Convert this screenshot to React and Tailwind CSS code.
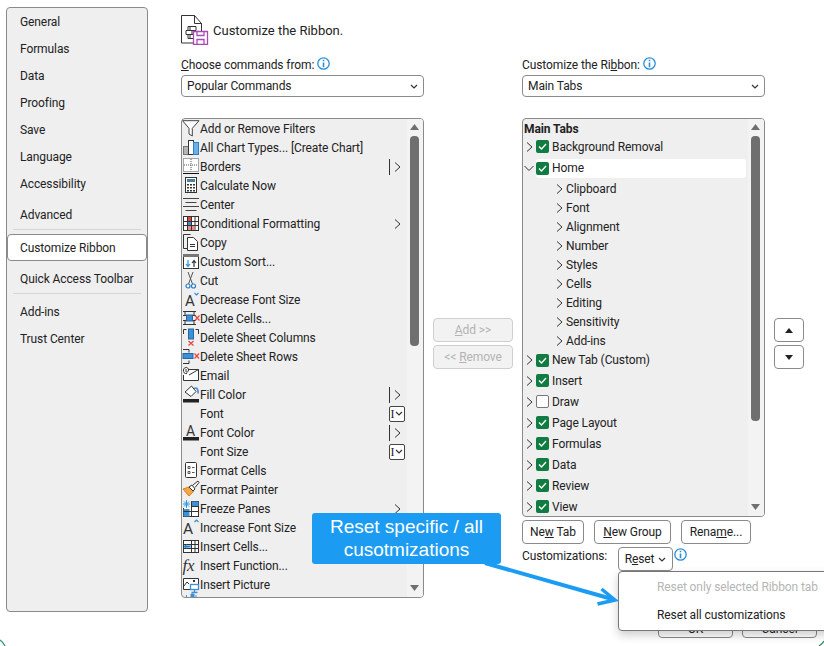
import React from 'react';

const navTop = ['General', 'Formulas', 'Data', 'Proofing', 'Save', 'Language', 'Accessibility'];

const Chev = ({ className = '' }) => (
  <svg width="7" height="10" viewBox="0 0 7 10" className={`shrink-0 ${className}`}>
    <path d="M1 .5l5 4.500-5 4.500" fill="none" stroke="#333" strokeWidth="1" />
  </svg>
);

const ChevDown = () => (
  <svg width="8" height="5" viewBox="0 0 8 5" className="shrink-0">
    <path d="M1 1l3 3 3-3" fill="none" stroke="#333" strokeWidth="1.200" />
  </svg>
);

const Info = ({ className = '' }) => (
  <svg width="13" height="13" viewBox="0 0 13 13" className={`shrink-0 ${className}`}>
    <circle cx="6.500" cy="6.500" r="5.700" fill="#fff" stroke="#2b8fd8" strokeWidth="1.300" />
    <path d="M6.500 2.800v1.400M6.500 5.400v4.800" stroke="#2b8fd8" strokeWidth="1.600" />
  </svg>
);

const Ic = ({ children }) => (
  <svg width="18" height="19" viewBox="0 0 18 19" className="shrink-0 overflow-visible">
    {children}
  </svg>
);

const k = '#333';
const blue = '#3d8fd6';
const red = '#e8443a';

const icons = {
  filter: <path d="M.5 1.700H17L10.300 9.300V17L7 15V9.300z" fill="#fff" stroke="#444" />,
  chart: (
    <>
      <rect x="1.500" y="8.500" width="5" height="8" fill="#b5b5b5" stroke="#777" />
      <rect x="6.500" y="2.500" width="5" height="14" fill="#fff" stroke={k} />
      <rect x="11.500" y="4.500" width="5" height="12" fill="#6cb0e8" stroke="#2e7fc4" />
    </>
  ),
  borders: (
    <>
      <rect x="1.500" y="1.500" width="15" height="13" fill="#fff" stroke="#555" strokeDasharray="1 1" />
      <path d="M9 2v12M2 8h14" stroke="#555" strokeDasharray="1 1" />
      <path d="M1 16.500h16" stroke="#111" strokeWidth="1.200" />
    </>
  ),
  calc: (
    <>
      <rect x="3.500" y="1.500" width="11" height="15" fill="#fff" stroke={k} />
      <rect x="5" y="3" width="8" height="3" fill="#4a7f9f" />
      <path d="M5 8h2v1.500H5zM8 8h2v1.500H8zM11 8h2v1.500h-2zM5 11h2v1.500H5zM8 11h2v1.500H8zM11 11h2v1.500h-2zM5 14h2v1.500H5zM8 14h2v1.500H8zM11 14h2v1.500h-2z" fill={k} />
    </>
  ),
  center: <path d="M1 3.500h16M3.500 7.500h11M1 11.500h16M3.500 15.500h11" stroke="#444" />,
  cond: (
    <>
      <rect x="1.500" y="2.500" width="15" height="14" fill="#fff" stroke={k} />
      <rect x="5" y="3" width="4" height="4" fill={red} />
      <rect x="5" y="7" width="4" height="4" fill={blue} />
      <rect x="5" y="12" width="7" height="4" fill="#f28a86" />
      <path d="M5.500 2.500v14M9.500 2.500v14M13 2.500v14M2 7.500h14M2 11.500h14" stroke={k} fill="none" />
    </>
  ),
  copy: (
    <>
      <path d="M5.500 15.500h-4V1.500h7" fill="none" stroke={k} />
      <path d="M5.500 4.500h6l4 4v9h-10z" fill="#fff" stroke={k} />
      <path d="M8 11.500h5M8 13.500h5" stroke={k} />
    </>
  ),
  sort: (
    <>
      <rect x="1.500" y="2.500" width="15" height="14" fill="#fff" stroke={k} />
      <rect x="1" y="2" width="16" height="3" fill="#777" />
      <path d="M6 8v6M4 12l2 2.500L8 12" fill="none" stroke="#2b8fd8" strokeWidth="1.200" />
      <path d="M12 15V9M10 11l2-2.500 2 2.500" fill="none" stroke={k} strokeWidth="1.200" />
    </>
  ),
  cut: (
    <>
      <path d="M6 1l4.500 12M11 1L6.500 13" stroke="#555" fill="none" />
      <circle cx="6" cy="15" r="2" fill="#fff" stroke="#2b7fc4" strokeWidth="1.200" />
      <circle cx="11.500" cy="15" r="2" fill="#fff" stroke="#2b7fc4" strokeWidth="1.200" />
    </>
  ),
  dec: (
    <>
      <text x="3" y="16" fontSize="15" fill="#333" fontFamily="Roboto, sans-serif">A</text>
      <path d="M12.500 3l2 2 2-2" fill="none" stroke="#2b8fd8" strokeWidth="1.100" />
    </>
  ),
  delCells: (
    <>
      <path d="M1 2.500h13M1 15.500h13M3 2.500v4M12 2.500v4M3 11.500v4M12 11.500v4M1 6.500h3M1 11.500h3M11 6.500h3M11 11.500h3" stroke={k} fill="none" />
      <rect x="4.500" y="6" width="6" height="6" fill={blue} stroke="#2467a5" />
      <path d="M13 6.500l4.500 5M17.500 6.500l-4.500 5" stroke={red} strokeWidth="1.200" />
    </>
  ),
  delCols: (
    <>
      <path d="M1.500 6V1.500h3M16.500 6V1.500h-3" stroke={k} fill="none" />
      <rect x="6.500" y="1" width="5" height="10" fill={blue} stroke="#2467a5" />
      <path d="M6.500 13l5 4.500M11.500 13l-5 4.500" stroke={red} strokeWidth="1.200" />
    </>
  ),
  delRows: (
    <>
      <path d="M1 2.500h6v3M1 16.500h6v-3" stroke={k} fill="none" />
      <rect x="1" y="6.500" width="10" height="5" fill={blue} stroke="#2467a5" />
      <path d="M12.500 6.500l4.500 5M17 6.500l-4.500 5" stroke={red} strokeWidth="1.200" />
    </>
  ),
  email: (
    <>
      <path d="M7 3.500h9.500v11h-15V9" fill="#fff" stroke={k} />
      <path d="M7 9l9.500-5.500" stroke={k} />
      <path d="M5 7.500C2 8 1.500 6 1.500 4c0-3 5-3.500 5 0 0 2-2 3-2.500 1.500V3" fill="#fff" stroke={k} />
    </>
  ),
  fill: (
    <>
      <path d="M9.500 1l4.500 5.500-5 5-6-4.500z" fill="#fff" stroke={k} />
      <path d="M12 3.500c3-1.500 4.500 1 4 5" fill="none" stroke={blue} strokeWidth="1.600" />
      <rect x="1" y="14" width="16" height="3.500" fill="#222" />
    </>
  ),
  fontColor: (
    <>
      <text x="4" y="13" fontSize="14" fill="#333" fontFamily="Roboto, sans-serif">A</text>
      <rect x="1" y="14" width="16" height="3.500" fill="#222" />
    </>
  ),
  formatCells: (
    <>
      <rect x="3.500" y="1.500" width="11" height="15" rx="1" fill="#fff" stroke={k} />
      <path d="M6 5.500h2v2H6zM6 10.500h2v2H6z" fill="none" stroke="#555" />
      <path d="M10 6.500h2.500M10 11.500h2.500" stroke="#555" />
    </>
  ),
  painter: (
    <>
      <path d="M1 9l6 7 5-5-5-4z" fill="#f4a64a" stroke="#e07b1a" />
      <path d="M7 7l3-2 3 4-2 2z" fill="#fff" stroke={k} />
      <path d="M11 5l5-4 1 1.500-4 5" fill="#fff" stroke={k} />
    </>
  ),
  freeze: (
    <>
      <rect x="1.500" y="2.500" width="15" height="15" fill="#fff" stroke={k} />
      <rect x="9" y="2.500" width="7.500" height="4.500" fill={blue} />
      <rect x="1.500" y="10" width="6" height="7.500" fill={blue} />
      <path d="M9.500 2.500v15M1.500 7.500h15M1.500 12.500h15" stroke={k} />
      <rect x="0" y="0" width="9" height="9" fill="#efefef" />
      <path d="M4.500 1v8M1 5h7M2 2.500l5 5M7 2.500l-5 5" stroke="#2b9be0" />
    </>
  ),
  inc: (
    <>
      <text x="1" y="16" fontSize="15.500" fill="#333" fontFamily="Roboto, sans-serif">A</text>
      <path d="M12.500 4l2-2 2 2" fill="none" stroke="#2b8fd8" strokeWidth="1.100" />
    </>
  ),
  insCells: (
    <>
      <rect x="1.500" y="3.500" width="15" height="12" fill="#fff" stroke={k} />
      <rect x="2" y="7" width="7" height="4.500" fill="#8cc3ee" />
      <path d="M9.500 3.500v12M1.500 7.500h15M1.500 11.500h15M13 3.500v12" stroke={k} />
      <path d="M8 9.500H2.500M5 7.500l-2.500 2 2.500 2" fill="none" stroke="#1f7cc8" />
    </>
  ),
  fx: <text x="0.500" y="15" fontSize="17" fill="#333" fontStyle="italic" fontFamily="Liberation Serif, serif">fx</text>,
  picture: (
    <>
      <path d="M8 14.500H1.500v-11h15V9" fill="#fff" stroke={k} />
      <path d="M2 11l3-4 2 2" fill="none" stroke={k} />
      <rect x="11" y="5" width="2" height="2" fill={k} />
      <rect x="8.500" y="9.500" width="8" height="5" fill="#fff" stroke={blue} strokeWidth="1.300" />
      <path d="M12.500 15v2.500M9.500 17.500h6" stroke={blue} strokeWidth="1.300" />
    </>
  ),
  insCol: <path d="M4.500 1v3M9 0h3v3H9zM14 1v3" stroke={blue} fill={blue} />,
};

const commands = [
  ['Add or Remove Filters', 'filter'],
  ['All Chart Types... [Create Chart]', 'chart'],
  ['Borders', 'borders', 'split'],
  ['Calculate Now', 'calc'],
  ['Center', 'center'],
  ['Conditional Formatting', 'cond', 'sub'],
  ['Copy', 'copy'],
  ['Custom Sort...', 'sort'],
  ['Cut', 'cut'],
  ['Decrease Font Size', 'dec'],
  ['Delete Cells...', 'delCells'],
  ['Delete Sheet Columns', 'delCols'],
  ['Delete Sheet Rows', 'delRows'],
  ['Email', 'email'],
  ['Fill Color', 'fill', 'split'],
  ['Font', null, 'box'],
  ['Font Color', 'fontColor', 'split'],
  ['Font Size', null, 'box'],
  ['Format Cells', 'formatCells'],
  ['Format Painter', 'painter'],
  ['Freeze Panes', 'freeze', 'sub'],
  ['Increase Font Size', 'inc'],
  ['Insert Cells...', 'insCells'],
  ['Insert Function...', 'fx'],
  ['Insert Picture', 'picture'],
  ['', 'insCol'],
];

const Scrollbar = ({ thumb }) => (
  <div className="w-[16px] shrink-0 bg-[#f3f3f3] flex flex-col items-start pl-[3px]">
    <svg width="9" height="6" viewBox="0 0 9 6" className="mt-[5px] mb-[6px] shrink-0">
      <path d="M4.500 0L9 6H0z" fill="#6f6f6f" />
    </svg>
    <div className={`w-[9px] rounded-[4px] bg-[#6f6f6f] shrink-0 ${thumb}`} />
    <svg width="9" height="6" viewBox="0 0 9 6" className="mt-auto mb-[6px] shrink-0">
      <path d="M4.500 6L9 0H0z" fill="#6f6f6f" />
    </svg>
  </div>
);

function CommandRow({ label, icon, extra }) {
  return (
    <div className="h-[19px] shrink-0 flex items-center relative">
      <Ic>{icon ? icons[icon] : null}</Ic>
      <span className="whitespace-nowrap">{label}</span>
      {extra === 'sub' && <Chev className="ml-auto mr-[6px]" />}
      {extra === 'split' && (
        <div className="ml-auto mr-[6px] flex items-center gap-[4px]">
          <div className="w-px h-[16px] bg-[#333]" />
          <Chev />
        </div>
      )}
      {extra === 'box' && (
        <div className="ml-auto mr-[2px] w-[16px] h-[16px] border border-[#444] rounded-[2px] flex items-center justify-center gap-px bg-white">
          <span className="font-['Liberation_Serif',serif] text-[12px] leading-none">I</span>
          <ChevDown />
        </div>
      )}
    </div>
  );
}

const Check = ({ checked }) =>
  checked ? (
    <div className="w-[13px] h-[13px] rounded-[2px] bg-[#107c41] flex items-center justify-center shrink-0">
      <svg width="9" height="7" viewBox="0 0 9 7">
        <path d="M1 3.500L3.500 6 8 1" fill="none" stroke="#fff" strokeWidth="1.300" />
      </svg>
    </div>
  ) : (
    <div className="w-[13px] h-[13px] rounded-[2px] bg-white border border-[#777] shrink-0" />
  );

function TabRow({ label, checked = true, h = 'h-[21px]' }) {
  return (
    <div className={`${h} shrink-0 flex items-center pl-[3px]`}>
      <Chev className="mr-[3px]" />
      <Check checked={checked} />
      <span className="ml-[3px] whitespace-nowrap">{label}</span>
    </div>
  );
}

function GroupRow({ label }) {
  return (
    <div className="h-[19px] shrink-0 flex items-center pl-[33px]">
      <Chev className="mr-[3px]" />
      <span className="whitespace-nowrap">{label}</span>
    </div>
  );
}

const Btn = ({ className = '', children }) => (
  <div className={`h-[24px] border border-[#8a8a8a] rounded-[4px] bg-white flex items-center justify-center whitespace-nowrap ${className}`}>
    {children}
  </div>
);

const Select = ({ value }) => (
  <div className="mt-[2px] h-[22px] border border-[#8a8a8a] rounded-[4px] flex items-center justify-between pl-[5px] pr-[5px]">
    <span>{value}</span>
    <ChevDown />
  </div>
);

export default function App() {
  return (
    <div className="relative w-[824px] h-[646px] overflow-hidden bg-white flex items-start font-['Roboto',sans-serif] text-[12px] tracking-[-0.1px] leading-[16px] text-[#222222]">
      {/* left nav */}
      <div className="ml-[6px] mt-[7px] w-[142px] h-[605px] bg-[#efefef] border border-[#8a8a8a] rounded-[4px] shrink-0 flex flex-col">
        <div>
          {navTop.map((n) => (
            <div key={n} className="h-[27px] flex items-center pl-[13px]">{n}</div>
          ))}
        </div>
        <div className="h-[30px] mt-[2px] pt-px flex items-center pl-[13px] shrink-0">Advanced</div>
        <div className="mx-[6px] h-px bg-[#d6d6d6] shrink-0" />
        <div className="mt-[4px] h-[27px] bg-white border border-[#8a8a8a] rounded-[4px] flex items-center pl-[12px] shrink-0">Customize Ribbon</div>
        <div className="h-[30px] mt-[2px] pt-px flex items-center pl-[13px] shrink-0">Quick Access Toolbar</div>
        <div className="mx-[6px] h-px bg-[#d6d6d6] shrink-0" />
        <div className="h-[27px] mt-[4px] flex items-center pl-[13px] shrink-0">Add-ins</div>
        <div className="h-[27px] flex items-center pl-[13px] shrink-0">Trust Center</div>
      </div>

      <div className="ml-[33px] pt-[15px] shrink-0 flex flex-col">
        {/* header */}
        <div className="h-[30px] flex items-center gap-[3px]">
          <svg width="29" height="30" viewBox="0 0 29 30" className="shrink-0">
            <path d="M.5.500h13l7 8V28H.5z" fill="#fff" stroke="#333" />
            <path d="M13.500.500v8h7" fill="none" stroke="#333" />
            <path d="M9 11.500h6v4H9zM5 15.500h6v4H5zM9 19.500h6v4H9zM7 15.500v-4h2M7 19.500v4h2" fill="#fff" stroke="#333" />
            <path d="M12.500 16.500H26.500V29.500H12.500z" fill="#fff" stroke="#a94ab5" strokeWidth="1.300" />
            <path d="M16 16.500v4h7v-4M16 29.500v-5h7v5" fill="none" stroke="#a94ab5" strokeWidth="1.300" />
          </svg>
          <span className="text-[13px] tracking-normal pt-px">Customize the Ribbon.</span>
        </div>

        <div className="mt-[12px] flex items-start">
          {/* commands column */}
          <div className="w-[243px] shrink-0 flex flex-col">
            <div className="h-[16px] flex items-center gap-[3px]">
              <span><span className="underline">C</span>hoose commands from:</span>
              <Info className="-mt-[3px]" />
            </div>
            <Select value="Popular Commands" />
            <div className="mt-[21px] h-[480px] border border-[#8a8a8a] rounded-[4px] bg-[#efefef] overflow-hidden flex">
              <div className="flex-1 min-w-0 flex flex-col">
                {commands.map(([label, icon, extra]) => (
                  <CommandRow key={label + icon} label={label} icon={icon} extra={extra} />
                ))}
              </div>
              <Scrollbar thumb="h-[210px]" />
            </div>
          </div>

          {/* add / remove */}
          <div className="ml-[9px] w-[80px] pt-[261px] shrink-0 flex flex-col gap-[3px]">
            <div className="h-[24px] border border-[#cfcfcf] rounded-[4px] bg-[#f2f2f2] text-[#b3b3b3] flex items-center justify-center"><span><span className="underline">A</span>dd &gt;&gt;</span></div>
            <div className="h-[24px] border border-[#cfcfcf] rounded-[4px] bg-[#f2f2f2] text-[#b3b3b3] flex items-center justify-center"><span>&lt;&lt; <span className="underline">R</span>emove</span></div>
          </div>

          {/* ribbon column */}
          <div className="ml-[9px] w-[243px] shrink-0 flex flex-col">
            <div className="h-[16px] flex items-center gap-[3px]">
              <span>Customize the Ri<span className="underline">b</span>bon:</span>
              <Info className="-mt-[3px]" />
            </div>
            <Select value="Main Tabs" />
            <div className="mt-[21px] h-[399px] border border-[#8a8a8a] rounded-[4px] bg-[#efefef] overflow-hidden flex">
              <div className="flex-1 min-w-0 flex flex-col">
                <div className="h-[18px] shrink-0 flex items-center pl-px pt-px font-bold">Main Tabs</div>
                <TabRow label="Background Removal" h="h-[19px]" />
                <div className="mt-[2px] h-[20px] shrink-0 flex items-center pl-[1px] pr-[2px]">
                  <svg width="10" height="7" viewBox="0 0 10 7" className="mr-[2px] shrink-0">
                    <path d="M.5 1L5 5.500 9.500 1" fill="none" stroke="#333" />
                  </svg>
                  <div className="flex-1 h-[19px] bg-white rounded-[3px] flex items-center">
                    <Check checked />
                    <span className="ml-[3px]">Home</span>
                  </div>
                </div>
                <div className="h-px shrink-0" />
                {['Clipboard', 'Font', 'Alignment', 'Number', 'Styles', 'Cells', 'Editing', 'Sensitivity', 'Add-ins'].map((g) => (
                  <GroupRow key={g} label={g} />
                ))}
                <TabRow label="New Tab (Custom)" h="h-[20px]" />
                <TabRow label="Insert" />
                <TabRow label="Draw" checked={false} />
                <TabRow label="Page Layout" />
                <TabRow label="Formulas" />
                <TabRow label="Data" />
                <TabRow label="Review" />
                <TabRow label="View" />
              </div>
              <Scrollbar thumb="h-[285px]" />
            </div>
            <div className="mt-[3px] flex gap-[10px]">
              <Btn className="w-[62px]"><span>Ne<span className="underline">w</span> Tab</span></Btn>
              <Btn className="w-[77px]"><span><span className="underline">N</span>ew Group</span></Btn>
              <Btn className="w-[70px]"><span>Rena<span className="underline">m</span>e...</span></Btn>
            </div>
            <div className="mt-[3px] flex items-start">
              <span className="w-[96px] mt-[1px] shrink-0">Customizations:</span>
              <Btn className="w-[55px] gap-[4px]"><span>R<span className="underline">e</span>set</span><ChevDown /></Btn>
              <Info className="ml-[1px] mt-[1px]" />
            </div>
          </div>

          {/* move up / down */}
          <div className="ml-[9px] w-[30px] pt-[261px] shrink-0 flex flex-col gap-[3px]">
            <Btn>
              <svg width="8" height="5" viewBox="0 0 8 5"><path d="M4 0l4 5H0z" fill="#222" /></svg>
            </Btn>
            <Btn>
              <svg width="8" height="5" viewBox="0 0 8 5"><path d="M4 5l4-5H0z" fill="#222" /></svg>
            </Btn>
          </div>
        </div>
      </div>

      {/* dialog buttons behind the open menu */}
      <Btn className="absolute left-[658px] top-[614px] w-[75px]"><span className="pt-[6px]">OK</span></Btn>
      <Btn className="absolute left-[742px] top-[614px] w-[75px]"><span className="pt-[6px]">Cancel</span></Btn>

      {/* reset menu */}
      <div className="absolute left-[618px] top-[571px] w-[230px] h-[60px] bg-white border border-[#777] rounded-[4px] shadow-[0_4px_10px_rgba(0,0,0,0.2)]">
        <div className="absolute left-[38px] top-[7px] text-[#b5b5b5] whitespace-nowrap">Reset only selected Ribbon tab</div>
        <div className="absolute left-[38px] top-[35px] whitespace-nowrap">Reset all customizations</div>
      </div>

      {/* callout */}
      <div className="absolute left-[312px] top-[513px] w-[189px] h-[51px] rounded-[3px] bg-[#1b9cf2] text-white text-center font-['Liberation_Sans',sans-serif] text-[19px] tracking-normal leading-[23px] pt-[2px]">
        Reset specific / all<br />cusotmizations
      </div>
      <svg width="824" height="646" className="absolute left-0 top-0 pointer-events-none">
        <path d="M485 563L612 599" stroke="#1b9cf2" strokeWidth="4" fill="none" />
        <path d="M601.500 589L615 600 597.500 604" stroke="#1b9cf2" strokeWidth="3.500" fill="none" />
        <path d="M0 640Q3 642 5 646" stroke="#2f8f6a" strokeWidth="1.300" fill="none" />
        <path d="M824 641Q822 644 819 646" stroke="#2f8f6a" strokeWidth="1.300" fill="none" />
      </svg>
    </div>
  );
}
